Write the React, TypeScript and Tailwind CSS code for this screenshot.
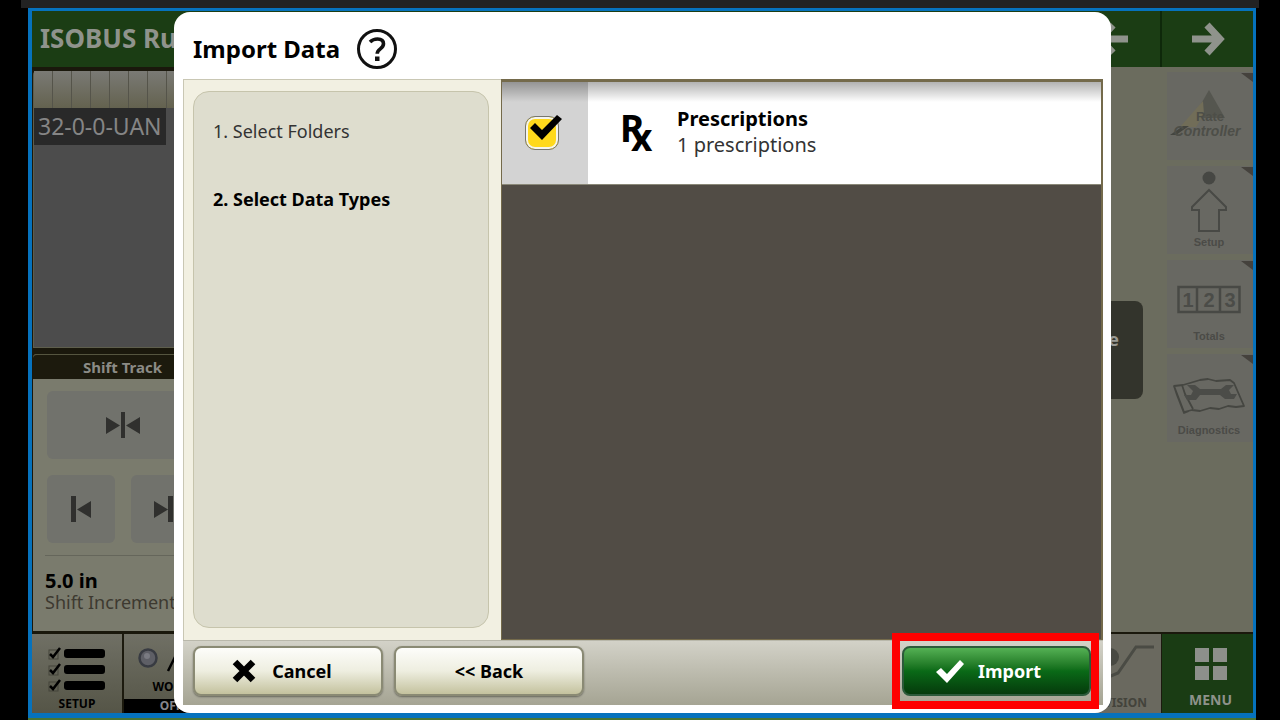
import { useState } from "react";
import type { ReactNode } from "react";

function TrackIcon({ kind }: { kind: "center" | "left" | "right" }) {
  return (
    <svg viewBox="0 0 36 28" className="h-7 w-9 fill-[#30302e]" aria-hidden="true">
      {kind === "center" && <path d="M1 6v17l14-8.500zM35 6v17l-14-8.500zM16 1h4v26h-4z" />}
      {kind === "left" && <path d="M8 1h5v26H8zM28 6v17l-14-8.500z" />}
      {kind === "right" && <path d="M8 6v17l14-8.500zM22 1h5v26h-5z" />}
    </svg>
  );
}

function TrackButton({ kind, label }: { kind: "center" | "left" | "right"; label: string }) {
  return (
    <button
      type="button"
      aria-label={label}
      className="flex h-[68px] flex-1 items-center justify-center rounded-md bg-[#71726c]"
    >
      <TrackIcon kind={kind} />
    </button>
  );
}

function SideTile({ label, children }: { label?: string; children: ReactNode }) {
  return (
    <button
      type="button"
      className="relative flex h-[88px] flex-col items-center justify-end bg-[#686862] pr-0.5 pb-1 text-[#4b4b47]"
    >
      <svg viewBox="0 0 12 10" className="absolute top-0 right-0 h-2.5 w-3 fill-[#45423d]" aria-hidden="true">
        <path d="M0 1h12v9z" />
      </svg>
      {children}
      {label && <span className="font-['Liberation_Sans'] text-[11px] leading-4 font-bold">{label}</span>}
    </button>
  );
}

function LightButton({ children }: { children: ReactNode }) {
  return (
    <button
      type="button"
      className="flex h-[50px] w-[190px] items-center justify-center gap-4 rounded-lg border-2 border-[#8a8a74] bg-linear-to-b from-[#fdfdfa] via-[#eeeee0] to-[#c4c29e] text-lg font-bold text-black shadow-[0_1px_2px_rgba(0,0,0,0.4)]"
    >
      {children}
    </button>
  );
}

function ShiftPanel() {
  return (
    <section className="flex flex-1 flex-col rounded-t-sm bg-[#7a7b6d]">
      <h2 className="rounded-t-sm border-t border-[#55553f] bg-[#1c1a0d] text-center text-[15px] leading-6 font-bold text-[#8b8b85]">
        Shift Track
      </h2>
      <div className="flex flex-col gap-4 px-3.5 pt-3">
        <div className="flex">
          <TrackButton kind="center" label="Center track" />
        </div>
        <div className="flex gap-4">
          <TrackButton kind="left" label="Shift left" />
          <TrackButton kind="right" label="Shift right" />
        </div>
      </div>
      <div className="mx-3 mt-3 border-t border-[#65665b] pt-3.5">
        <p className="text-xl leading-[22px] font-bold text-black">5.0 in</p>
        <p className="text-lg leading-5 whitespace-nowrap text-[#3d3930]">Shift Increment</p>
      </div>
    </section>
  );
}

function SideBar() {
  return (
    <aside className="flex w-[86px] flex-col gap-1.5 pt-[5px]">
      <SideTile>
        <svg viewBox="0 0 84 66" className="mb-2 h-[66px] w-[84px]" aria-hidden="true">
          <path d="M42 8L26 36h32z" fill="#55564f" />
          <path d="M36 19L13 45h16l8-13z" fill="#716d58" />
          <text x="43" y="39" textAnchor="middle" className="fill-[#4d4e48] font-['Liberation_Sans'] text-[13px] font-bold">
            Rate
          </text>
          <path d="M3 53l13-9h6l-13 9z" fill="#44453f" />
          <text x="40" y="54" textAnchor="middle" className="fill-[#4d4e48] font-['Liberation_Sans'] text-[14px] font-bold italic">
            Controller
          </text>
        </svg>
      </SideTile>
      <SideTile label="Setup">
        <svg viewBox="0 0 40 64" className="h-16 w-10" aria-hidden="true">
          <circle cx="20" cy="8" r="6.500" fill="#464743" />
          <path d="M20 20l17 17v3h-7v21H10V40H3v-3z" fill="none" stroke="#484945" strokeWidth="2" />
        </svg>
      </SideTile>
      <SideTile label="Totals">
        <svg viewBox="0 0 64 46" className="mb-1.5 h-[46px] w-16" aria-hidden="true">
          <path d="M1.500 11h61v25h-61zM20 11v25M43 11v25" fill="none" stroke="#484945" strokeWidth="2.500" />
          <g className="fill-[#4b4c48] font-['Liberation_Sans'] text-[20px] font-bold" textAnchor="middle">
            <text x="11" y="31">1</text>
            <text x="32" y="31">2</text>
            <text x="53" y="31">3</text>
          </g>
        </svg>
      </SideTile>
      <SideTile label="Diagnostics">
        <svg viewBox="0 0 76 44" className="mb-1 h-11 w-[76px]" aria-hidden="true">
          <path
            d="M3 12l9-1 7-2 10-3 8-1 8 2 14-1 4 3 10 23-8 1-8-1-9 3-9-1-10 3-8-1-8 2zM3 12l3 9 7 18 5-2M11 11l3 9 8 15"
            fill="none"
            stroke="#454641"
            strokeWidth="1.800"
            strokeLinejoin="round"
          />
          <path
            d="M16 11h8l5 4h21l5-4h8l-5 5 2 4h6l-3 5h-9l-5-4H29l-4 5h-9l-3-5h7l2-4z"
            fill="#4b4c48"
          />
        </svg>
      </SideTile>
    </aside>
  );
}

function BottomBar() {
  return (
    <footer className="flex h-[79px] bg-[#5e5e52]">
      <button
        type="button"
        className="flex w-[92px] flex-col items-center gap-1 border-r-2 border-[#1c1a0e] bg-linear-to-b from-[#707065] to-[#555547] pt-3 text-xs font-bold text-black"
      >
        <svg viewBox="0 0 60 46" className="h-[46px] w-[60px]" aria-hidden="true">
          {[0, 16, 32].map((y) => (
            <g key={y}>
              <rect x="2" y={y + 4} width="9" height="9" fill="none" stroke="#45453b" />
              <path d={`M3 ${y + 8}l3 3 7-9`} fill="none" stroke="#000" strokeWidth="2.500" />
              <rect x="17" y={y + 3} width="41" height="9" rx="3" />
            </g>
          ))}
        </svg>
        SETUP
      </button>
      <button
        type="button"
        className="flex w-[94px] flex-col items-center justify-end bg-linear-to-b from-[#707065] to-[#555547] text-xs font-bold text-black"
      >
        <svg viewBox="0 0 66 28" className="mb-1 h-7 w-[66px]" aria-hidden="true">
          <circle cx="10" cy="11" r="8.500" fill="#5e5f66" stroke="#383b42" strokeWidth="2.500" />
          <circle cx="9" cy="9" r="3" fill="#7a7b82" />
          <path d="M30 24l7-14 9 14" fill="none" stroke="#000" strokeWidth="2.500" />
        </svg>
        <span className="pb-1 leading-4">WORK</span>
        <span className="w-full bg-black text-center leading-[14px] text-[#85858c]">OFF</span>
      </button>
      <div className="flex-1" />
      <button
        type="button"
        className="flex w-24 flex-col items-end justify-end border-r border-[#1c1a0e] bg-[#6a695f] pr-3.5 pb-0.5 text-xs leading-4 font-bold text-[#43433b]"
      >
        <svg viewBox="0 0 64 36" className="-mr-2 mb-4 h-9 w-16" aria-hidden="true">
          <circle cx="19" cy="14" r="9" fill="#484942" />
          <path d="M6 20l14 13 7-3L45 4h18" fill="none" stroke="#4a4b44" strokeWidth="3" />
        </svg>
        VISION
      </button>
      <button
        type="button"
        className="flex w-[91px] flex-col items-center gap-2.5 bg-[#1a3c14] pt-3.5 pl-1.5 text-sm leading-5 font-bold text-[#8e928b]"
      >
        <svg viewBox="0 0 32 32" className="size-8 fill-[#8d908b]" aria-hidden="true">
          <path d="M0 0h14v14H0zM18 0h14v14H18zM0 18h14v14H0zM18 18h14v14H18z" />
        </svg>
        MENU
      </button>
    </footer>
  );
}

function ImportDialog() {
  const [selected, setSelected] = useState(true);
  return (
    <div
      role="dialog"
      aria-labelledby="import-title"
      className="absolute top-px right-[142px] bottom-0 left-[142px] flex flex-col rounded-2xl bg-white p-2 pl-[9px] text-black"
    >
      <header className="flex h-[59px] items-center gap-4 pb-0.5 pl-2.5">
        <h1 id="import-title" className="text-2xl font-bold">
          Import Data
        </h1>
        <button type="button" aria-label="Help" className="size-[42px]">
          <svg viewBox="0 0 42 42" className="size-full" fill="none" stroke="#111" aria-hidden="true">
            <circle cx="21" cy="21" r="18.500" strokeWidth="3" />
            <path d="M14 14c2-2 4.500-3 7.500-3 4 0 6 2 6 4.800 0 5.200-6.300 5-6.300 10" strokeWidth="3.600" />
            <path d="M19 28.500h4.500v4.500H19z" fill="#111" stroke="none" />
          </svg>
        </button>
      </header>

      <div className="flex flex-1">
        <nav className="flex w-[318px] border-t border-l border-[#c9c7b4] bg-[#f2f0e2] pt-[11px] pr-3 pb-3 pl-[9px]">
          <ol className="flex-1 rounded-2xl border border-[#c6c4ac] bg-[#deddce] px-[19px] pt-[25px] text-lg leading-7">
            <li className="text-[#333]">1. Select Folders</li>
            <li className="pt-10 font-bold">2. Select Data Types</li>
          </ol>
        </nav>
        <main className="flex-1 border-t-[3px] border-r-2 border-b border-l border-[#746a4b] bg-[#514c45]">
          <label className="relative flex h-[103px] border-b border-[#8a8878] bg-white">
            <span className="flex w-[86px] items-center justify-center bg-[#d3d3d3]">
              <span className="relative mr-1.5 size-[34px]">
                <input
                  type="checkbox"
                  checked={selected}
                  onChange={(e) => setSelected(e.target.checked)}
                  className="size-full appearance-none rounded-[10px] border border-[#77776f] bg-white shadow-[inset_0_0_0_2px_#f4f4ee] checked:bg-[#ffd91c]"
                />
                {selected && (
                  <svg viewBox="0 0 40 36" className="pointer-events-none absolute -top-1 left-0 h-9 w-10" aria-hidden="true">
                    <path d="M5 16l5-5 7 7L32 3l5 4-20 21z" fill="#000" />
                  </svg>
                )}
              </span>
            </span>
            <svg viewBox="0 0 40 56" className="mt-6 ml-[30px] h-14 w-10" aria-hidden="true">
              <text
                x="2"
                y="36"
                className="font-['Liberation_Sans_Narrow','Noto_Sans',sans-serif] text-[37px] font-bold"
              >
                R
                <tspan x="13" y="45">
                  x
                </tspan>
              </text>
            </svg>
            <span className="flex flex-col pt-6 pl-[19px]">
              <span className="text-xl leading-[26px] font-bold">Prescriptions</span>
              <span className="text-xl leading-[26px] text-[#333]">1 prescriptions</span>
            </span>
            <span className="pointer-events-none absolute inset-x-0 top-0 h-5 bg-linear-to-b from-black/30 to-transparent" />
          </label>
        </main>
      </div>

      <footer className="flex h-[65px] items-center gap-[11px] border-t border-[#b9b8ab] bg-linear-to-b from-[#d3d2c8] to-[#a5a493] pr-3 pb-1 pl-2.5">
        <LightButton>
          <svg viewBox="0 0 24 24" className="size-6" fill="none" stroke="#000" strokeWidth="6.500" aria-hidden="true">
            <path d="M3 3l18 18M21 3L3 21" />
          </svg>
          <span className="pr-3">Cancel</span>
        </LightButton>
        <LightButton>&lt;&lt; Back</LightButton>
        <div className="relative ml-auto">
          <button
            type="button"
            className="flex h-[50px] w-[189px] items-center justify-center gap-3.5 rounded-lg border-2 border-[#2c5a3a] bg-linear-to-b from-[#54b154] via-[#0a6a17] to-[#053b0c] pr-4 text-lg font-bold text-white"
          >
            <svg viewBox="0 0 28 24" className="h-6 w-7 fill-white" aria-hidden="true">
              <path d="M0 13l5-4 6 6L24 1l4 4-17 19z" />
            </svg>
            Import
          </button>
          <span className="pointer-events-none absolute -inset-y-[13px] -right-2 -left-2.5 border-8 border-[#fe0000]" />
        </div>
      </footer>
    </div>
  );
}

export default function App() {
  return (
    <div className="flex min-h-screen flex-col bg-black font-['Noto_Sans',sans-serif]">
      <div className="mr-[21px] ml-[21px] h-2 bg-[#222]" />
      <div className="relative mr-6 ml-7 flex flex-1 flex-col border-4 border-t-[3px] border-r-[3px] border-b-[5px] border-[#0672bd] bg-[#1a180c]">
        <header className="flex h-14 bg-[#1b3d14] text-[#8f938c]">
          <p className="flex-1 pl-2 text-[26px] leading-[54px] font-bold">ISOBUS Ru</p>
          <button type="button" aria-label="Previous page" className="flex w-[94px] items-center justify-center border-r-2 border-[#0e280a] pr-1">
            <svg viewBox="0 0 34 34" className="h-[34px] w-[34px]" fill="none" stroke="currentColor" strokeWidth="7" aria-hidden="true">
              <path d="M33 17H6M18 3L5 17l13 14" />
            </svg>
          </button>
          <button type="button" aria-label="Next page" className="flex w-[91px] items-center justify-center">
            <svg viewBox="0 0 34 34" className="h-[34px] w-[34px]" fill="none" stroke="currentColor" strokeWidth="7" aria-hidden="true">
              <path d="M1 17h27M16 3l13 14-13 14" />
            </svg>
          </button>
        </header>
        <div className="flex flex-1">
          <div className="flex w-[180px] flex-col gap-1.5 pt-1 pb-[3px] pl-px">
            <section className="flex h-[277px] flex-col items-start rounded-t-sm border-b border-l border-[#5e5e4c] bg-[#4c4c4c]">
              <div className="flex h-[37px] w-full bg-linear-to-b from-[#7a7a75] to-[#64624f]">
                {Array.from({ length: 9 }, (_, i) => (
                  <span key={i} className="w-[19px] border-r border-[#55544a]" />
                ))}
              </div>
              <p className="bg-[#292929] px-1 text-[23px] leading-[37px] text-[#858585]">32-0-0-UAN</p>
            </section>
            <ShiftPanel />
          </div>
          <div className="mb-0.5 flex flex-1 bg-[#6b6c5e]">
            <div className="flex flex-1 items-center justify-end pr-6">
              <p className="w-64 rounded-lg bg-[#33342c] pr-6 pb-[22px] text-right text-lg leading-[76px] font-bold text-[#9a9a94]">e</p>
            </div>
            <SideBar />
          </div>
        </div>
        <BottomBar />
        <ImportDialog />
      </div>
      <div className="mr-6 ml-7 h-0.5 bg-[#4a7534]" />
    </div>
  );
}
